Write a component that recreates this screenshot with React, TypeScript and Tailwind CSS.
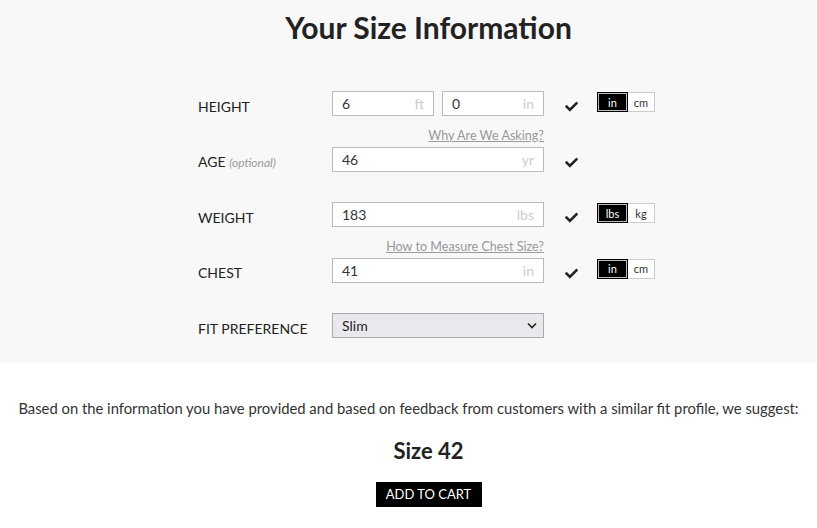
import React from "react";

const Check = () => (
  <svg width="13" height="11" viewBox="0 0 512 400" className="block">
    <path d="M173.9 389.4L7.5 223c-10-10-10-26.2 0-36.2l36.2-36.2c10-10 26.2-10 36.2 0L192 262.7 432.1 22.5c10-10 26.2-10 36.2 0l36.2 36.2c10 10 10 26.2 0 36.2L210.1 389.4c-10 10-26.2 10-36.2 0z" fill="#222" />
  </svg>
);

const Toggle = ({ a, b }: { a: string; b: string }) => (
  <div className="flex h-[20px] text-[11px] leading-none">
    <div className="flex items-center justify-center w-[31px] bg-black text-white border border-black shadow-[inset_0_0_0_1px_#bbb]">{a}</div>
    <div className="flex items-center justify-center w-[27px] bg-white text-[#333] border border-[#ccc] border-l-0">{b}</div>
  </div>
);

const Field = ({ value, unit, w }: { value: string; unit: string; w: string }) => (
  <div className={`flex items-center justify-between h-[25px] bg-white border border-[#bbb] px-[9px] text-[14px] ${w}`}>
    <span className="text-[#333]">{value}</span>
    <span className="text-[#ccc]">{unit}</span>
  </div>
);

const Row = ({
  label,
  link,
  children,
  check,
  toggle,
}: {
  label: React.ReactNode;
  link?: string;
  children: React.ReactNode;
  check?: boolean;
  toggle?: React.ReactNode;
}) => (
  <div className="flex flex-col">
    <div className="h-[16px] w-[346px] flex justify-end items-end pb-[4px]">
      {link && <span className="text-[12.6px] leading-none text-[#999] underline">{link}</span>}
    </div>
    <div className="flex items-center h-[25px]">
      <div className="w-[134px] text-[14px] text-[#222] pt-[5px]">{label}</div>
      <div className="w-[212px]">{children}</div>
      <div className="w-[53px] flex pl-[21px] pt-[6px]">{check && <Check />}</div>
      <div className="self-start pt-[1px]">{toggle}</div>
    </div>
  </div>
);

export default function App() {
  return (
    <div className="w-[817px] h-[528px] bg-white" style={{ fontFamily: "Lato, 'Noto Sans', sans-serif" }}>
      <div className="bg-[#f8f8f8] h-[363px] pt-[10px]">
        <h1 className="pl-[40px] text-center text-[30px] font-bold text-[#222] leading-[34px]">Your Size Information</h1>
        <div className="ml-[198px] mt-[31px] flex flex-col gap-[14.5px]">
          <Row
            label="HEIGHT"
            check
            toggle={<Toggle a="in" b="cm" />}
          >
            <div className="flex gap-[8px]">
              <Field value="6" unit="ft" w="w-[102px]" />
              <Field value="0" unit="in" w="w-[102px]" />
            </div>
          </Row>
          <Row
            label={
              <span>
                AGE <span className="italic text-[12px] text-[#999]">(optional)</span>
              </span>
            }
            link="Why Are We Asking?"
            check
          >
            <Field value="46" unit="yr" w="w-[212px]" />
          </Row>
          <Row label="WEIGHT" check toggle={<Toggle a="lbs" b="kg" />}>
            <Field value="183" unit="lbs" w="w-[212px]" />
          </Row>
          <Row label="CHEST" link="How to Measure Chest Size?" check toggle={<Toggle a="in" b="cm" />}>
            <Field value="41" unit="in" w="w-[212px]" />
          </Row>
          <Row label="FIT PREFERENCE">
            <div className="flex items-center justify-between h-[25px] w-[212px] bg-[#e9e9ed] border border-[#aaa] pl-[9px] pr-[6px] text-[14px] text-[#222]">
              <span>Slim</span>
              <svg width="10" height="7" viewBox="0 0 10 7">
                <path d="M1 1.5l4 4 4-4" stroke="#222" strokeWidth="1.6" fill="none" />
              </svg>
            </div>
          </Row>
        </div>
      </div>
      <div className="flex flex-col items-center">
        <p className="mt-[36px] text-[14.8px] text-[#333] leading-[18px] whitespace-nowrap">
          Based on the information you have provided and based on feedback from customers with a similar fit profile, we suggest:
        </p>
        <div className="pl-[40px] flex flex-col items-center">
          <div className="mt-[21px] text-[22px] font-bold text-[#222] leading-[26px]">Size 42</div>
          <button className="mt-[18px] h-[25px] w-[106px] bg-black text-white text-[13px] leading-none">ADD TO CART</button>
        </div>
      </div>
    </div>
  );
}
